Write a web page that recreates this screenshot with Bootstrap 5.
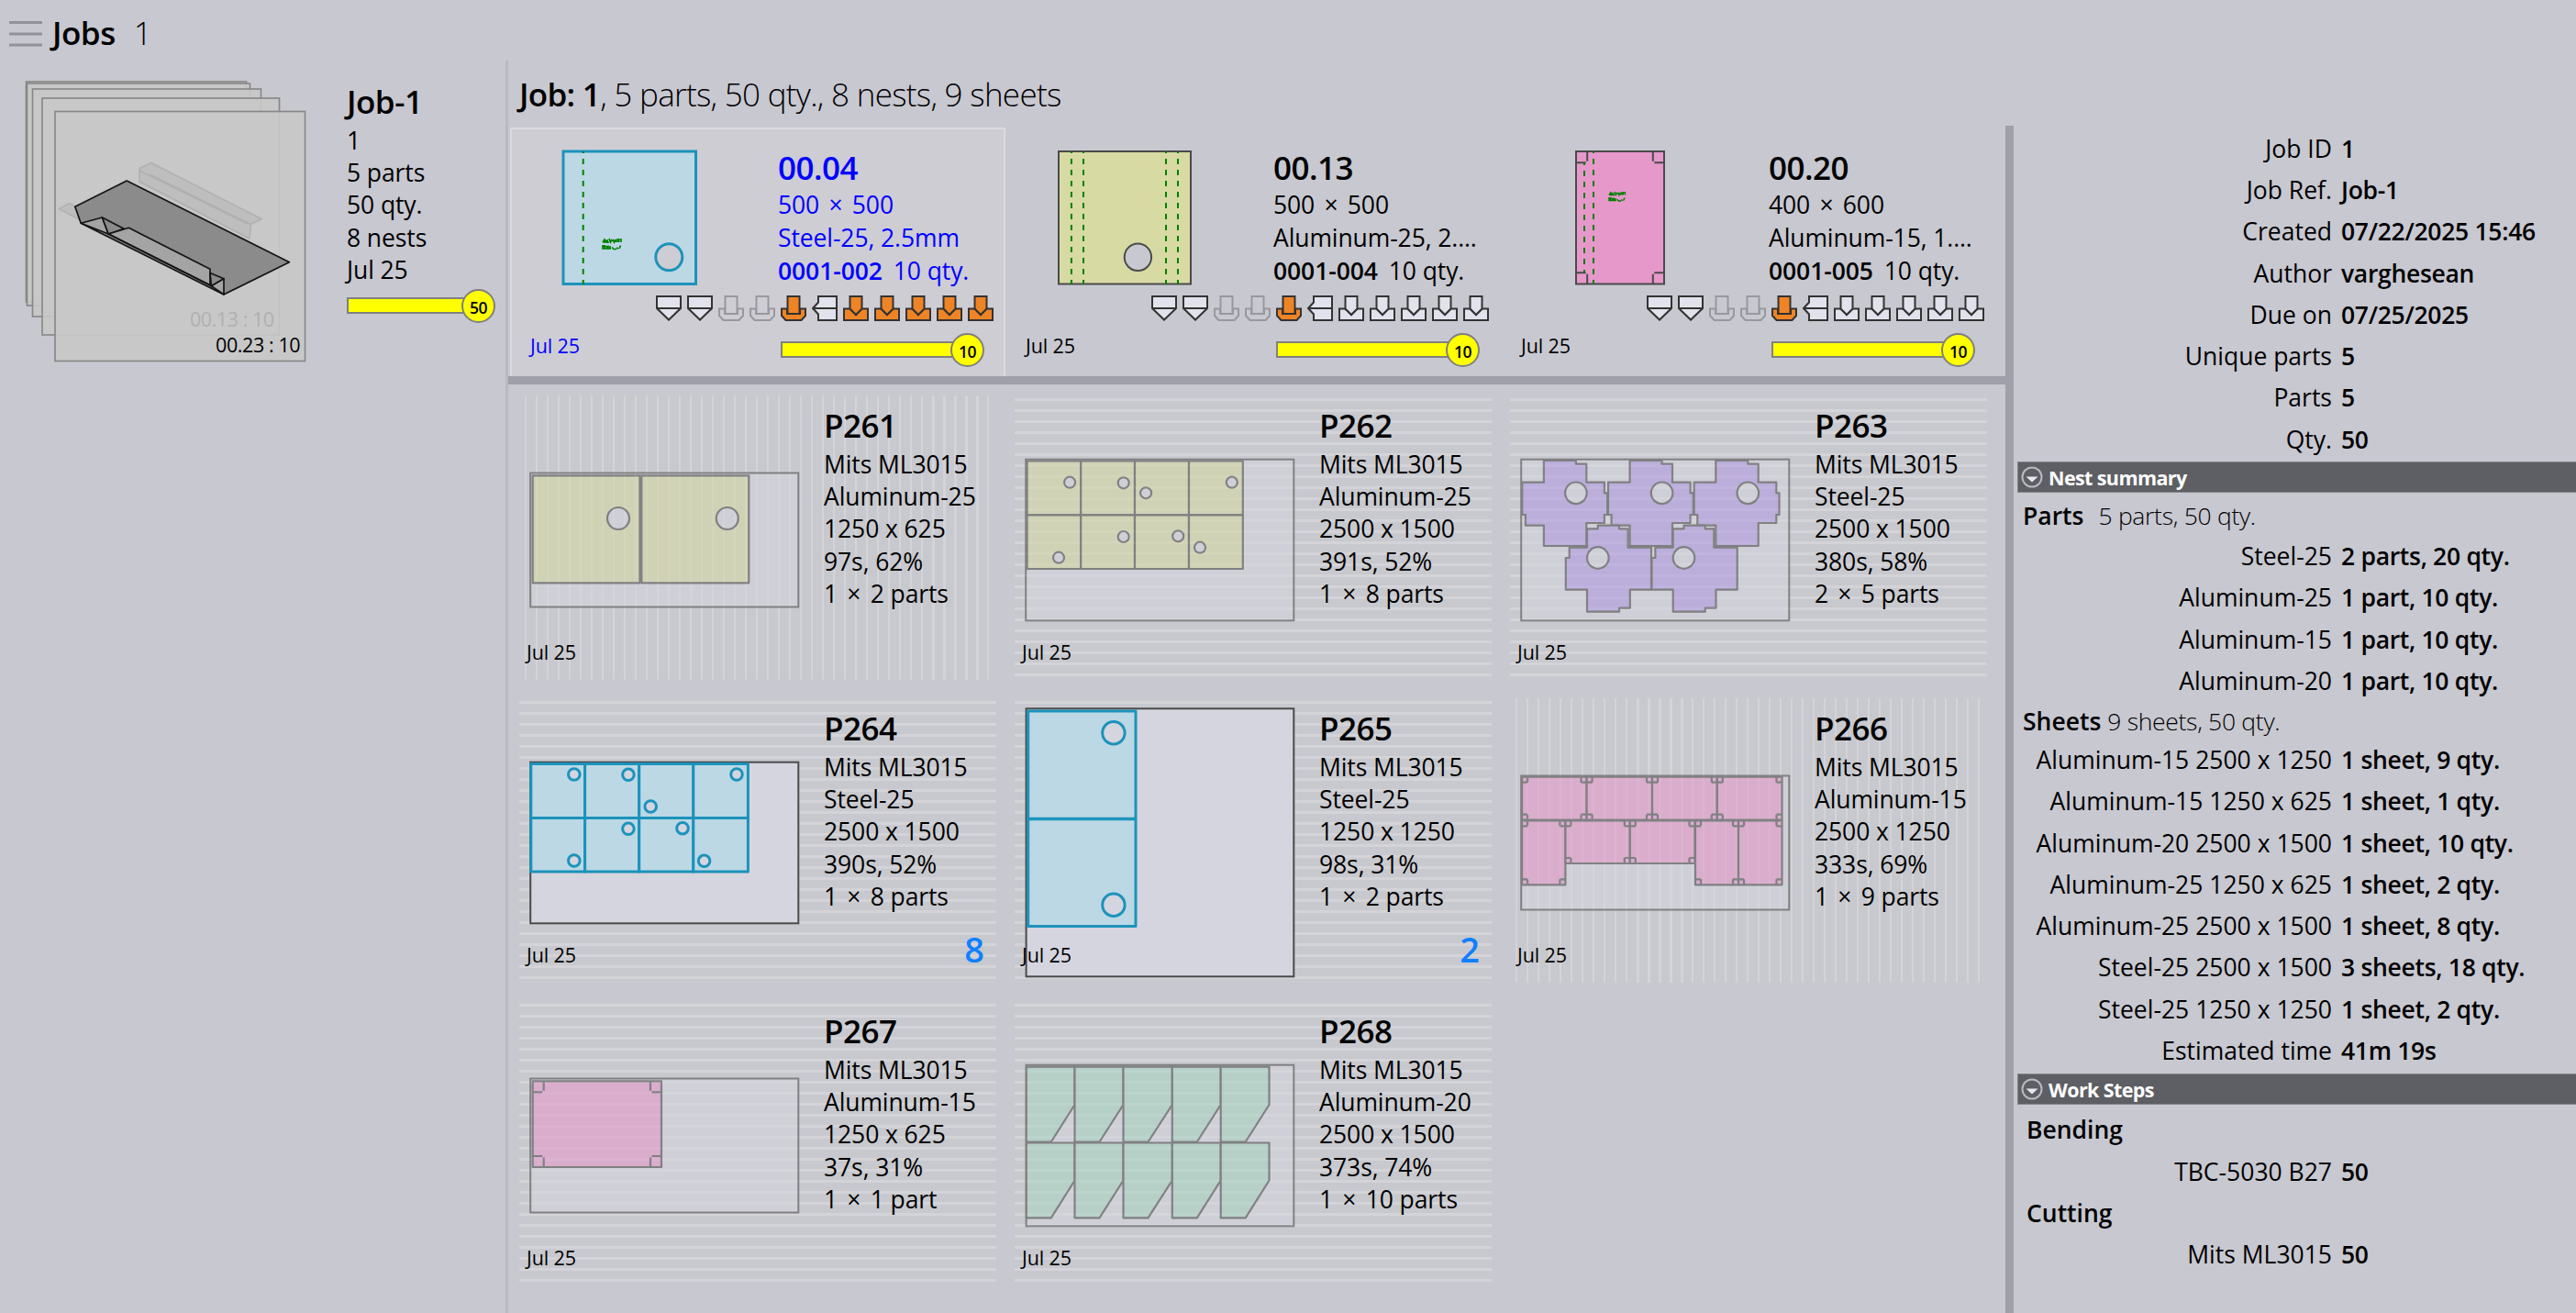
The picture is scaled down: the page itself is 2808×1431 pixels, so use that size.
<!DOCTYPE html>
<html lang="en">
<head>
    <meta charset="UTF-8">
    <meta name="viewport" content="width=device-width, initial-scale=1.0">
    <title>Jobs</title>
    <link href="https://cdn.jsdelivr.net/npm/bootstrap@5.3.2/dist/css/bootstrap.min.css" rel="stylesheet">
    <style>
        body {
            height: 1431px;
            overflow: hidden;
            background: #c8c8d0;
            color: #000;
            font-family: "Open Sans", "Noto Sans", sans-serif;
            font-size: 26.5px;
            line-height: 35.2px;
            letter-spacing: -0.1px;
        }

        svg {
            display: block;
            flex: none;
        }

        .fw-light { font-weight: 300 !important; }
        .fw-semibold { font-weight: 600 !important; }

        .topbar { height: 66px; padding: 16px 0 0 10px; }
        .topbar svg { margin-top: -1px; }

        .title {
            font-size: 35px;
            line-height: 40px;
            letter-spacing: -0.5px;
            font-weight: 600;
        }

        .jobs-pane { width: 554px; border-right: 3px solid #b9b9c0; }
        .job-text { padding-top: 25px; }
        .job-text .title, .nest-text .title { margin-bottom: 5px; }
        .job-text .qty { margin-top: 2px; }

        .main-pane { width: 1632px; }
        .job-head { height: 73px; line-height: 73px; font-size: 35px; letter-spacing: -0.7px; padding-left: 12px; }
        .parts-row { height: 271px; padding-left: 2px; }
        .split-h { height: 9px; background: #a0a0aa; }
        .split-v { width: 9px; margin-top: 71px; background: #a0a0aa; }

        .part-card { width: 540px; height: 271px; position: relative; }
        .part-card.selected {
            background: #cecdd3;
            color: #00f;
            box-shadow: inset 2px 2px #dbdbdf, inset -2px 0 #dbdbdf;
        }
        .part-text { width: 236px; padding-top: 24px; line-height: 35.8px; }
        .part-text .title { margin-bottom: 3px; }
        .times { margin: 0 3.5px; }

        .tools { position: absolute; right: 13px; top: 182.5px; gap: 6px; }
        .due { position: absolute; font-size: 21.5px; line-height: 30px; }
        .part-card .due { left: 22px; top: 223px; }
        .part-card .qty { position: absolute; left: 295px; top: 223px; }

        .qty { height: 38px; }
        .qty-bar { height: 18px; background: #ff0; border: 2px solid #808080; }
        .qty-dot {
            width: 37px;
            height: 37px;
            margin-left: -18px;
            border-radius: 50%;
            background: #ff0;
            border: 2px solid #808080;
            color: #000;
            font-size: 17.5px;
            line-height: 36px;
            letter-spacing: -0.6px;
        }

        .nests { padding: 12px 0 0 12px; display: grid; grid-template-columns: repeat(3, 520px); grid-auto-rows: 310px; gap: 20px; }
        .nest { position: relative; }
        .nest::before { content: ""; position: absolute; }
        .grain-v::before {
            inset: 0 8px 0 6px;
            background: repeating-linear-gradient(90deg, #d3d3d8 0 2.5px, #c8c9ce 2.5px 12px);
        }
        .grain-h::before {
            inset: 3px 0 4px 0;
            background: repeating-linear-gradient(#d3d3d8 0 3px, #c8c9ce 3px 12px);
        }
        .nest > * { position: relative; }
        .nest-text { padding: 13px 0 0 22px; }
        .nest .due { position: absolute; left: 8px; top: 265px; }
        .count { position: absolute; right: 13px; top: 248px; font-size: 38px; line-height: 50px; color: #1080ff; font-weight: 600; }
        .faded { opacity: .57; }

        .side-pane { width: 613px; padding-top: 72.8px; letter-spacing: 0; }
        .prop { height: 45.25px; line-height: 47px; }
        .prop span { width: 347px; text-align: right; margin-right: 10px; }
        .prop b { font-weight: 600; letter-spacing: -0.3px; }
        .section-bar {
            height: 34px;
            margin: 2.4px 0 0 4px;
            padding-left: 3px;
            background: #5e5f64;
            border: 1px solid #85868a;
            border-right: 0;
            color: #fff;
            font-size: 21.5px;
            font-weight: 700;
            line-height: 34px;
            letter-spacing: -0.6px;
        }
        .section-bar svg { margin: 4px 6px 0 0; }
        .group-head { padding-left: 10px; }
        .group-head .fw-light { letter-spacing: -0.3px; }
        .group-parts { height: 46px; padding-top: 4px; line-height: 43px; }
        .group-sheets { height: 41px; padding-top: 1.5px; line-height: 41px; }
        .group-bend { height: 50px; padding: 4px 0 0 14px; line-height: 47px; }
        .group-cut { height: 45.2px; padding-left: 14px; line-height: 47px; }
    </style>
</head>
<body>
    <div class="topbar d-flex">
        <svg width="36" height="40" viewBox="0 0 36 40" stroke="#919398" stroke-width="3">
            <path d="M0 9.500H36M0 22H36M0 34H36"/>
        </svg>
        <div class="title ms-2 ps-0">&#8202;Jobs</div>
        <div class="title fw-light ms-3 ps-1">1</div>
    </div>

    <div class="d-flex" style="height: 1365px">
        <div class="jobs-pane d-flex flex-shrink-0">
            <svg width="378" height="350" viewBox="0 66 378 350">
                <g fill="#c8c8c8" fill-opacity=".9" stroke="#868686" stroke-width="1.600">
                    <rect x="28.500" y="89" width="240" height="240"/>
                    <rect x="29.500" y="91" width="243" height="242"/>
                    <rect x="35.500" y="97" width="249" height="248"/>
                    <rect x="46" y="107" width="258.500" height="258"/>
                </g>
                <rect x="60" y="121.500" width="272.500" height="272" fill="#c8c8c8" fill-opacity=".9" stroke="#868686" stroke-width="1.600"/>
                <text x="207" y="356" font-size="21.500" textLength="92" fill="#b0b0b0">00.13 : 10</text>
                <g fill="#bebebe" stroke="#b0b0b0" stroke-width="1.500" stroke-linejoin="round">
                    <path d="M152 198L152 183.500L165 177.500L285 238.500L273.500 244.500L272 260Z"/>
                    <path d="M152 186L270 244M163 190L273.500 244.500M152 198L272 260" fill="none"/>
                    <path d="M64 227.700L75.700 221.700L84 226L88 240Z"/>
                </g>
                <g stroke="#141414" stroke-width="1.700" stroke-linejoin="round">
                    <path d="M138.200 197L315.400 285.700L243.900 321L88.200 243.300L81.800 225.300Z" fill="#8b8b8b"/>
                    <path d="M88.200 243.300L111.400 237L118.200 255Z" fill="#a4a4a4"/>
                    <path d="M111.400 237L135 249.300L118.200 255Z" fill="#8b8b8b"/>
                    <path d="M118.200 255L140.400 248.300L229 293.300V310.700Z" fill="#a4a4a4"/>
                    <path d="M229 297.500L244 303.700L230.400 311.700Z" fill="#8b8b8b"/>
                    <path d="M230.400 311.700L244 303.700V321Z" fill="#a4a4a4"/>
                    <path d="M118.200 255L231 312" fill="none"/>
                </g>
                <text x="235" y="384" font-size="21.500" textLength="92.500">00.23 : 10</text>
            </svg>
            <div class="job-text">
                <div class="title">Job-1</div>
                <div>1</div>
                <div>5 parts</div>
                <div>50 qty.</div>
                <div>8 nests</div>
                <div>Jul 25</div>
                <div class="qty d-flex align-items-center">
                    <div class="qty-bar" style="width: 143px"></div>
                    <div class="qty-dot fw-semibold text-center">50</div>
                </div>
            </div>
        </div>

        <div class="main-pane flex-shrink-0">
            <div class="job-head"><span class="fw-semibold">Job: 1</span><span class="fw-light">, 5 parts, 50 qty., 8 nests, 9 sheets</span></div>
            <div class="parts-row d-flex" id="parts"></div>
            <div class="split-h"></div>
            <div class="nests" id="nests"></div>
        </div>

        <div class="split-v flex-shrink-0"></div>

        <div class="side-pane flex-shrink-0">
            <div class="prop d-flex"><span>Job ID</span><b>1</b></div>
            <div class="prop d-flex"><span>Job Ref.</span><b>Job-1</b></div>
            <div class="prop d-flex"><span>Created</span><b>07/22/2025 15:46</b></div>
            <div class="prop d-flex"><span>Author</span><b>varghesean</b></div>
            <div class="prop d-flex"><span>Due on</span><b>07/25/2025</b></div>
            <div class="prop d-flex"><span>Unique parts</span><b>5</b></div>
            <div class="prop d-flex"><span>Parts</span><b>5</b></div>
            <div class="prop d-flex"><span>Qty.</span><b>50</b></div>

            <div class="section-bar d-flex">
                <svg width="24" height="24" viewBox="0 0 24 24"><circle cx="12" cy="12" r="10.500" fill="none" stroke="#b9babd" stroke-width="2"/><path d="M5.500 11.500H18.500L12 17.500Z" fill="#e8e8ea"/></svg>
                <div>Nest summary</div>
            </div>
            <div class="group-head group-parts"><span class="fw-semibold">Parts</span><span class="fw-light ms-3">5 parts, 50 qty.</span></div>
            <div class="prop d-flex"><span>Steel-25</span><b>2 parts, 20 qty.</b></div>
            <div class="prop d-flex"><span>Aluminum-25</span><b>1 part, 10 qty.</b></div>
            <div class="prop d-flex"><span>Aluminum-15</span><b>1 part, 10 qty.</b></div>
            <div class="prop d-flex"><span>Aluminum-20</span><b>1 part, 10 qty.</b></div>
            <div class="group-head group-sheets"><span class="fw-semibold">Sheets</span> <span class="fw-light">9 sheets, 50 qty.</span></div>
            <div class="prop d-flex"><span>Aluminum-15 2500 x 1250</span><b>1 sheet, 9 qty.</b></div>
            <div class="prop d-flex"><span>Aluminum-15 1250 x 625</span><b>1 sheet, 1 qty.</b></div>
            <div class="prop d-flex"><span>Aluminum-20 2500 x 1500</span><b>1 sheet, 10 qty.</b></div>
            <div class="prop d-flex"><span>Aluminum-25 1250 x 625</span><b>1 sheet, 2 qty.</b></div>
            <div class="prop d-flex"><span>Aluminum-25 2500 x 1500</span><b>1 sheet, 8 qty.</b></div>
            <div class="prop d-flex"><span>Steel-25 2500 x 1500</span><b>3 sheets, 18 qty.</b></div>
            <div class="prop d-flex"><span>Steel-25 1250 x 1250</span><b>1 sheet, 2 qty.</b></div>
            <div class="prop d-flex"><span>Estimated time</span><b>41m 19s</b></div>

            <div class="section-bar d-flex">
                <svg width="24" height="24" viewBox="0 0 24 24"><circle cx="12" cy="12" r="10.500" fill="none" stroke="#b9babd" stroke-width="2"/><path d="M5.500 11.500H18.500L12 17.500Z" fill="#e8e8ea"/></svg>
                <div>Work Steps</div>
            </div>
            <div class="group-bend fw-semibold">Bending</div>
            <div class="prop d-flex"><span>TBC-5030 B27</span><b>50</b></div>
            <div class="group-cut fw-semibold">Cutting</div>
            <div class="prop d-flex"><span>Mits ML3015</span><b>50</b></div>
        </div>
    </div>

    <script src="https://cdn.jsdelivr.net/npm/bootstrap@5.3.2/dist/js/bootstrap.bundle.min.js"></script>
    <script>
        const LIGHT = '#e2e2ec', ORANGE = '#ee8425', DARK = '#333';

        // tool icons, 28 x 28
        function tool(kind) {
            const paths = {
                funnel: '<path d="M1 1H27V14L14 26.500L1 14Z"/><path d="M1 14H27"/>',
                cup: '<path d="M1 14.500H7V20H21V14.500H27V22L22.500 27H5.500L1 22Z"/><path d="M7.500 1H20.500V20H7.500Z"/>',
                side: '<path d="M7 1H27V27H7V20.500L1 14L7 7.500Z"/><path d="M1 14H27"/>',
                punch: '<path d="M1 14.500H7.500L14 21L20.500 14.500H27V27H1Z"/><path d="M7.500 1H20.500V14.500L14 21L7.500 14.500Z"/>'
            };
            const [shape, look] = kind.split('-');
            const fill = look === 'off' ? 'none' : look === 'hot' ? ORANGE : LIGHT;
            const stroke = look === 'off' ? '#98989e' : DARK;
            return `<svg width="28" height="28" viewBox="0 0 28 28" fill="${fill}" stroke="${stroke}" stroke-width="2">${paths[shape]}</svg>`;
        }

        function rect(x1, y1, x2, y2) {
            return `<rect x="${x1}" y="${y1}" width="${x2 - x1}" height="${y2 - y1}"/>`;
        }

        function holes(list, r, fill) {
            return list.map(([x, y]) => `<circle cx="${x}" cy="${y}" r="${r}" fill="${fill}"/>`).join('');
        }

        // plate with relief cuts in its four corners
        function notched(x1, y1, x2, y2, n) {
            const g = n > 8 ? 1.5 : 0;
            return rect(x1, y1, x2, y2) + `<path fill="none" d="
                M${x1 + n} ${y1}V${y1 + n - g}M${x1} ${y1 + n}H${x1 + n - g}
                M${x2 - n} ${y1}V${y1 + n - g}M${x2} ${y1 + n}H${x2 - n + g}
                M${x1 + n} ${y2}V${y2 - n + g}M${x1} ${y2 - n}H${x1 + n - g}
                M${x2 - n} ${y2}V${y2 - n + g}M${x2} ${y2 - n}H${x2 - n + g}"/>`;
        }

        function bend(x, y1, y2, offset = 4) {
            return `<path d="M${x} ${y1}V${y2}" stroke="#008000" stroke-width="2" stroke-dasharray="6 6" stroke-dashoffset="${offset}"/>`;
        }

        function etching(x, y, s) {
            return `<path transform="translate(${x} ${y}) scale(${s})" fill="none" stroke="#008000" stroke-width="1.700"
                d="M0 4L2 1L4 4M0 4H7M1 2.500H6M5 1V5M7 0L8.500 4L10 1M11 1L12.500 4L14 1M14 1V4M16 0V4M18 0L17.500 4M20 0V4M0 7V11H5M0 8.500H5M2 7V11M4 8L5 11H9M6 7.500V11M8 8V11M10 9.500L12 11.500H15M15 10L17 11M19.500 7.500L18 11"/>`;
        }

        const parts = [
            {
                name: '00.04', size: '500 × 500', material: 'Steel-25, 2.5mm', id: '0001-002', selected: true, punch: 'punch-hot',
                art: `<g fill="#bcd8e5" stroke="#1c93bb" stroke-width="3">${rect(58, 26, 202.5, 170.5)}${holes([[173.3, 141.3]], 14.5, '#cecdd3')}</g>`
                    + bend(79.7, 26, 171) + etching(101, 121, 1)
            },
            {
                name: '00.13', size: '500 × 500', material: 'Aluminum-25, 2....', id: '0001-004', punch: 'punch-on',
                art: `<g fill="#d7daa3" stroke="#4a4a4a" stroke-width="2">${rect(58, 26, 202, 170.5)}${holes([[144.4, 141.3]], 14.7, '#c8c8d0')}</g>`
                    + bend(71.9, 26, 171) + bend(85, 26, 171) + bend(175, 26, 171) + bend(188, 26, 171)
            },
            {
                name: '00.20', size: '400 × 600', material: 'Aluminum-15, 1....', id: '0001-005', punch: 'punch-on',
                art: `<g fill="#e698ca" stroke="#4a4a4a" stroke-width="2">${notched(82, 26, 178, 170.5, 12.2)}</g>`
                    + bend(91, 38, 158, 3) + bend(101, 26, 171) + etching(118, 70, 0.87)
            }
        ];

        // the multiplication sign gets a little more air than a plain space gives
        function spaced(text) {
            return text.replace('×', '<span class="times">×</span>');
        }

        document.getElementById('parts').innerHTML = parts.map(p => {
            const tools = ['funnel-on', 'funnel-on', 'cup-off', 'cup-off', 'cup-hot', 'side-on'].concat(Array(5).fill(p.punch));
            return `
            <div class="part-card d-flex flex-shrink-0 ${p.selected ? 'selected' : ''}">
                <svg width="292" height="200" viewBox="0 0 292 200">${p.art}</svg>
                <div class="part-text text-nowrap">
                    <div class="title">${p.name}</div>
                    <div>${spaced(p.size)}</div>
                    <div>${p.material}</div>
                    <div><span class="fw-semibold">${p.id}</span><span class="ms-2 ps-1">10 qty.</span></div>
                </div>
                <div class="tools d-flex">${tools.map(tool).join('')}</div>
                <div class="due">Jul 25</div>
                <div class="qty d-flex align-items-center">
                    <div class="qty-bar" style="width: 203px"></div>
                    <div class="qty-dot fw-semibold text-center">10</div>
                </div>
            </div>`;
        }).join('');

        const SHEET = '#d5d5df';

        function grid(xs, ys) {
            let out = '';
            for (let j = 0; j < ys.length - 1; j++)
                for (let i = 0; i < xs.length - 1; i++)
                    out += rect(xs[i], ys[j], xs[i + 1], ys[j + 1]);
            return out;
        }

        function crossBoxes() {
            const upper = '36.9,71 71.9,71 71.9,74.7 83.3,74.7 83.3,94.7 102.9,94.7 102.9,106.3 106.1,106.3 106.1,130 102.9,130 102.9,139 83.3,139 83.3,164 36.9,164 36.9,141.7 16.9,141.7 16.9,130 13.3,130 13.3,94.7 36.9,94.7';
            const lower = '84,235.7 119,235.7 119,231.7 130.8,231.7 130.8,211.7 154,211.7 154,165.7 128.6,165.7 128.6,145.3 119,145.3 119,141.7 95.8,141.7 95.8,145.3 84,145.3 84,165.7 64.7,165.7 64.7,177 60.8,177 60.8,211.7 84,211.7';
            const one = (pts, dx, cx, cy) => `<g transform="translate(${dx} 0)"><polygon points="${pts}"/>${holes([[cx, cy]], 11.8, SHEET)}</g>`;
            return [0, 93.7, 187.4].map(dx => one(upper, dx, 71.9, 106.3)).join('')
                + [0, 93.7].map(dx => one(lower, dx, 95.8, 177)).join('');
        }

        function blades() {
            const xs = [12.8, 65.5, 118.5, 171.8, 224.7, 277.5];
            let out = '';
            for (const [top, mid, bottom] of [[71.7, 113, 153.5], [154.5, 195.5, 236.3]])
                for (let i = 0; i < 5; i++)
                    out += `<polygon points="${xs[i]},${top} ${xs[i + 1]},${top} ${xs[i + 1]},${mid} ${xs[i] + 27},${bottom} ${xs[i]},${bottom}"/>`;
            return out;
        }

        const nests = [
            {
                name: 'P261', grain: 'v', lines: ['Aluminum-25', '1250 x 625', '97s, 62%', '1 × 2 parts'],
                sheet: [12.2, 84.5, 304.3, 230.5], color: '#d7daa3',
                art: rect(14.7, 87.3, 131.5, 204.3) + rect(133.3, 87.3, 250.3, 204.3) + holes([[108, 134], [226.8, 134]], 12, SHEET)
            },
            {
                name: 'P262', grain: 'h', lines: ['Aluminum-25', '2500 x 1500', '391s, 52%', '1 × 8 parts'],
                sheet: [12.2, 69.7, 304.3, 245.3], color: '#d7daa3',
                art: grid([13.6, 72.2, 131, 190, 248.8], [71.5, 130.3, 189])
                    + holes([[60.1, 94.7], [118.7, 95.3], [143.1, 106.3], [236.8, 94.7], [48, 176.7], [118.7, 154], [178.2, 153.3], [202, 165.7]], 6, SHEET)
            },
            {
                name: 'P263', grain: 'h', lines: ['Steel-25', '2500 x 1500', '380s, 58%', '2 × 5 parts'],
                sheet: [12.2, 69.7, 304.3, 245.3], color: '#b29be4', art: crossBoxes()
            },
            {
                name: 'P264', grain: 'h', lines: ['Steel-25', '2500 x 1500', '390s, 52%', '1 × 8 parts'], count: 8,
                sheet: [12.2, 69.7, 304.3, 245.3], color: '#bcd8e5',
                art: grid([12.8, 71.6, 130.7, 189.8, 249.4], [71.5, 130.5, 189])
                    + holes([[59.8, 83], [118.9, 83.3], [143.2, 118], [237, 83], [59.8, 177], [118.9, 142.3], [178, 141.7], [201.6, 177.3]], 6.3, SHEET)
            },
            {
                name: 'P265', grain: 'h', lines: ['Steel-25', '1250 x 1250', '98s, 31%', '1 × 2 parts'], count: 2,
                sheet: [12.6, 11.3, 304.3, 303.3], color: '#bcd8e5',
                art: rect(14.7, 14, 132, 131.3) + rect(14.7, 131.8, 132, 248.5) + holes([[107.9, 37.7], [107.9, 225.3]], 12.2, SHEET)
            },
            {
                name: 'P266', grain: 'v', lines: ['Aluminum-15', '2500 x 1250', '333s, 69%', '1 × 9 parts'],
                sheet: [12.2, 84.5, 304.3, 230.5], color: '#e698ca',
                art: [[13, 85.7, 83.6, 132.7], [83.6, 85.7, 155, 132.7], [155, 85.7, 225.8, 132.7], [225.8, 85.7, 296.5, 132.7],
                      [13, 133.3, 60.4, 203.3], [60.4, 133.3, 130.8, 180], [130.8, 133.3, 201.5, 180], [202, 133.3, 249, 203.3], [249, 133.3, 296.5, 203.3]]
                    .map(r => notched(...r, 6)).join('')
            },
            {
                name: 'P267', grain: 'h', lines: ['Aluminum-15', '1250 x 625', '37s, 31%', '1 × 1 part'],
                sheet: [12.2, 84.5, 304.3, 230.5], color: '#e698ca', art: notched(14.7, 87.3, 155, 181, 12)
            },
            {
                name: 'P268', grain: 'h', lines: ['Aluminum-20', '2500 x 1500', '373s, 74%', '1 × 10 parts'],
                sheet: [12.6, 69.7, 304.3, 245.3], color: '#a9d5c3', art: blades()
            }
        ];

        document.getElementById('nests').innerHTML = nests.map(n => `
            <div class="nest grain-${n.grain} d-flex">
                <svg width="310" height="310" viewBox="0 0 310 310" stroke-width="2" class="${n.count ? '' : 'faded'}">
                    <g fill="${SHEET}" stroke="#4a4a4a">${rect(...n.sheet)}</g>
                    <g fill="${n.color}" stroke="${n.count ? '#1c93bb' : '#4a4a4a'}" stroke-width="${n.count ? 3 : 2.2}" stroke-linejoin="round">${n.art}</g>
                </svg>
                <div class="nest-text text-nowrap">
                    <div class="title">${n.name}</div>
                    <div>Mits ML3015</div>
                    ${n.lines.map(line => `<div>${spaced(line)}</div>`).join('')}
                </div>
                <div class="due">Jul 25</div>
                ${n.count ? `<div class="count">${n.count}</div>` : ''}
            </div>`).join('');
    </script>
</body>
</html>
